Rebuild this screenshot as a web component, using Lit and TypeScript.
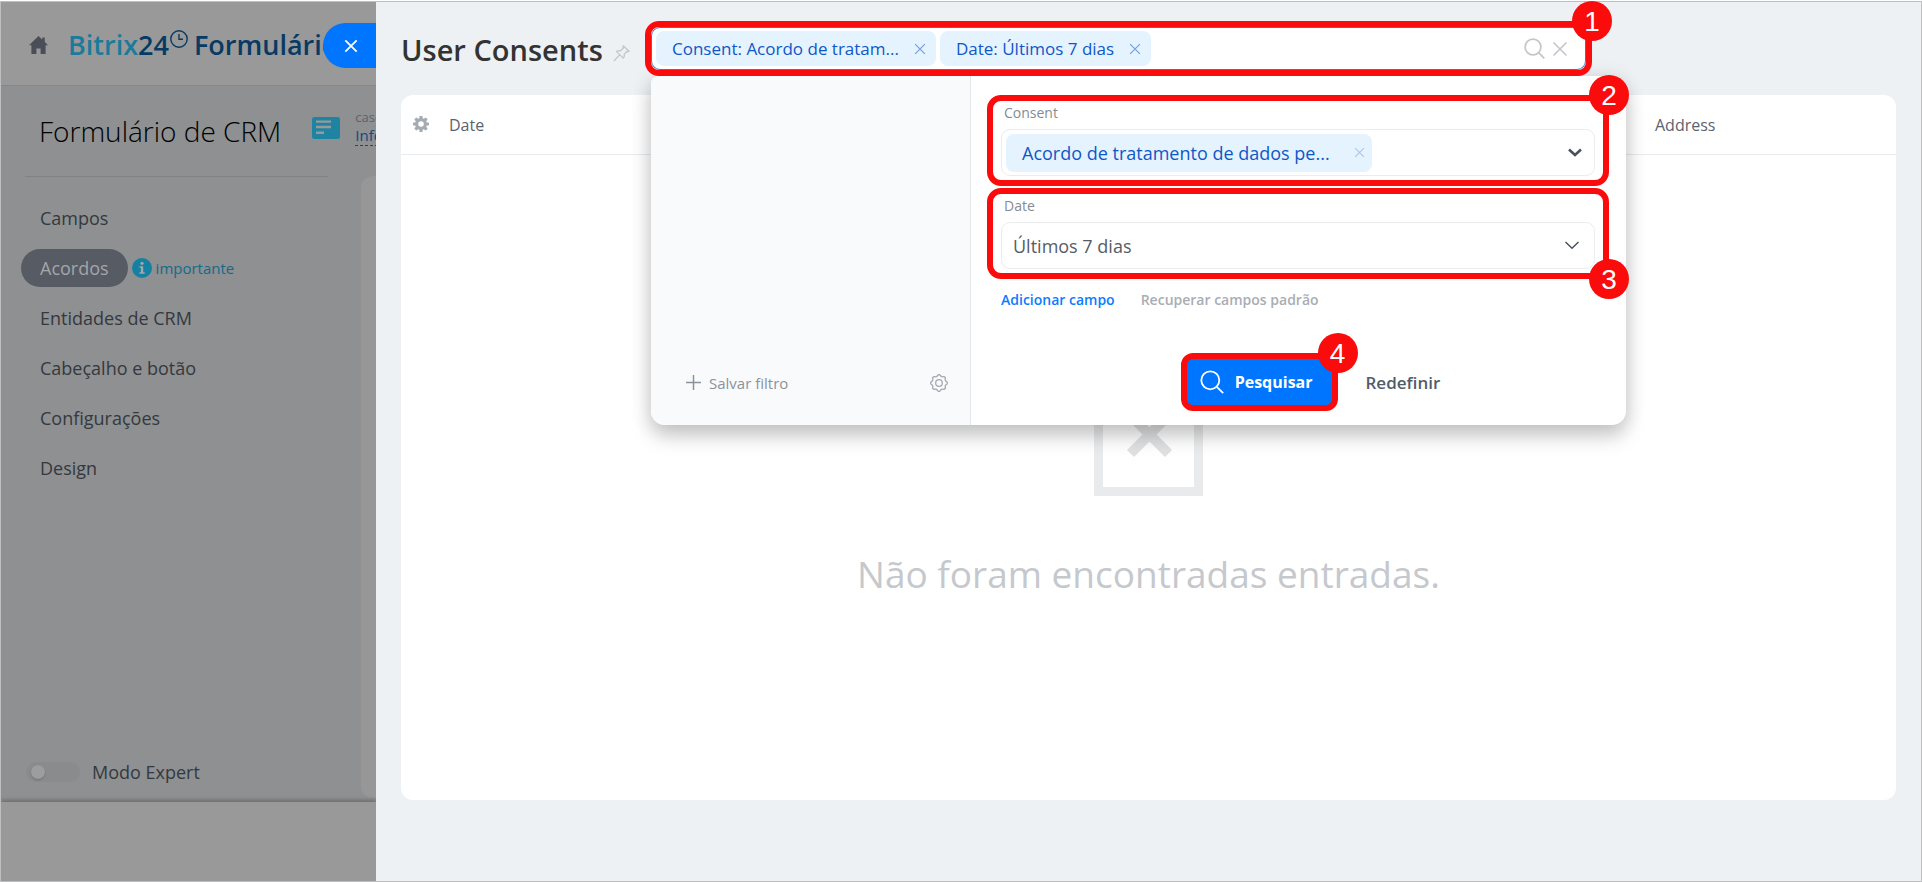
import { LitElement, html, css, svg } from "lit";
import { customElement, property, state } from "lit/decorators.js";
import { classMap } from "lit/directives/class-map.js";

const cross = (size: number, width = 1) => html`
  <svg width=${size} height=${size} viewBox="0 0 16 16" fill="none" stroke="currentColor" stroke-width=${width} aria-hidden="true">
    <path d="M1.5 1.5l13 13M14.5 1.5l-13 13" />
  </svg>`;

const magnifier = (size: number, width = 1.5) => html`
  <svg width=${size} height=${size} viewBox="0 0 24 24" fill="none" stroke="currentColor" stroke-width=${width} aria-hidden="true">
    <circle cx="10.3" cy="10.3" r="9" />
    <path d="M16.8 16.8l6.4 6.4" />
  </svg>`;

const gearTeeth = [0, 45, 90, 135, 180, 225, 270, 315].map(
  (a) => svg`<rect x="6.4" y="0" width="3.2" height="4" rx="0.6" transform="rotate(${a} 8 8)" />`
);

/* Outline of an eight-lobed cog around (9, 9). */
const cogOutline =
  Array.from({ length: 96 }, (_, i) => {
    const t = (i / 96) * Math.PI * 2;
    const r = 7.6 + 0.75 * Math.tanh(1.6 * Math.cos(8 * t));
    return `${i ? "L" : "M"}${(9 + r * Math.sin(t)).toFixed(2)} ${(9 - r * Math.cos(t)).toFixed(2)}`;
  }).join("") + "Z";

const base = css`
  * {
    box-sizing: border-box;
  }
  svg {
    display: block;
    flex: none;
  }
  button,
  input,
  select {
    font: inherit;
    color: inherit;
    margin: 0;
    padding: 0;
    border: 0;
    background: none;
    outline: none;
  }
  button {
    cursor: pointer;
  }
`;

@customElement("callout-frame")
class CalloutFrame extends LitElement {
  @property() number = "";
  @property() corner = "top";

  static styles = css`
    :host {
      display: block;
      position: relative;
      border: 6px solid #fa0c0c;
      border-radius: 14px;
    }
    .badge {
      position: absolute;
      right: -26px;
      width: 40px;
      height: 40px;
      border-radius: 50%;
      background: #fa0c0c;
      color: #fff;
      font: 28px/42px "Liberation Sans", Arial, sans-serif;
      text-align: center;
      z-index: 1;
    }
    .top {
      top: -26px;
    }
    .bottom {
      bottom: -26px;
    }
  `;

  render() {
    return html`<slot></slot>
      <span class="badge ${classMap({ top: this.corner === "top", bottom: this.corner === "bottom" })}">${this.number}</span>`;
  }
}

@customElement("form-editor")
class FormEditor extends LitElement {
  @state() private items = ["Campos", "Acordos", "Entidades de CRM", "Cabeçalho e botão", "Configurações", "Design"];
  @state() private current = "Acordos";

  static styles = [
    base,
    css`
      :host {
        display: flex;
        flex-direction: column;
        overflow: hidden;
        min-width: 0;
        background: #8e9091;
        color: #34393f;
        white-space: nowrap;
      }
      a {
        color: inherit;
        text-decoration: none;
      }
      .top {
        display: flex;
        align-items: center;
        height: 84px;
        padding: 2px 0 0 28px;
        background: #999;
        border-bottom: 1px solid #858788;
      }
      .home {
        color: #4a4f57;
      }
      .logo {
        display: flex;
        margin-left: 20px;
        font-size: 27px;
        line-height: 36px;
        font-weight: 600;
        color: #083a63;
      }
      .brand {
        color: #1c7a9a;
      }
      .clock {
        margin: 3px 6px 0 1px;
      }
      .heading {
        display: flex;
        align-items: center;
        height: 90px;
        padding-left: 38px;
      }
      h1 {
        margin: 0;
        font-size: 28px;
        line-height: 38px;
        font-weight: 300;
        color: #000;
      }
      .doc {
        margin: 0 15px 6px 31px;
        color: #1f84a1;
      }
      .caption {
        font-size: 13px;
        line-height: 17px;
        color: #5e6368;
        padding-bottom: 8px;
      }
      .caption a {
        display: block;
        width: max-content;
        font-size: 15px;
        line-height: 19px;
        color: #0f4a82;
        border-bottom: 1px dashed #0f4a82;
      }
      .body {
        flex: 1;
        display: flex;
      }
      .side {
        display: flex;
        flex-direction: column;
        width: 327px;
        margin: 0 33px 0 0;
        flex: none;
      }
      .rule {
        margin: 0 0 0 24px;
        border: 0;
        border-top: 1px solid #808283;
      }
      nav {
        display: flex;
        flex-direction: column;
        gap: 12px;
        padding: 22px 0 0 20px;
        font-size: 18px;
        line-height: 38px;
      }
      .row {
        display: flex;
        align-items: center;
        gap: 4px;
      }
      .link {
        padding: 0 19px;
        border-radius: 19px;
      }
      .link.active {
        background: #565b64;
        color: #a3a6a9;
      }
      .note {
        display: flex;
        align-items: center;
        gap: 4px;
        font-size: 15px;
        color: #126b8a;
      }
      .expert {
        display: flex;
        align-items: center;
        gap: 12px;
        margin: auto 0 17px 25px;
        font-size: 18px;
        line-height: 26px;
      }
      .toggle {
        appearance: none;
        display: flex;
        align-items: center;
        width: 54px;
        height: 20px;
        padding: 0 5px;
        border-radius: 10px;
        background: #898b8c;
      }
      .toggle::before {
        content: "";
        width: 14px;
        height: 14px;
        border-radius: 50%;
        background: #9c9d9d;
        box-shadow: 0 1px 2px rgba(0, 0, 0, 0.2);
      }
      .toggle:checked {
        justify-content: flex-end;
      }
      .card {
        flex: 1;
        margin-bottom: 4px;
        border-radius: 12px 0 0 12px;
        background: #979797;
      }
      .bottom {
        height: 79px;
        background: #999;
        box-shadow: 0 -2px 4px rgba(0, 0, 0, 0.25);
      }
    `,
  ];

  render() {
    return html`
      <header class="top">
        <a class="home" href="#" aria-label="Home">
          <svg width="19" height="18" viewBox="0 0 19 18" fill="currentColor">
            <path d="M9.5 0L0 9.2h2.4V18h5v-5.600h4.200V18h5V9.200H19L15.800 6V1.600h-2.500v2z" />
          </svg>
        </a>
        <div class="logo">
          <span class="brand">Bitrix</span><span>24</span>
          <svg class="clock" width="18" height="18" viewBox="0 0 18 18" fill="none" stroke="currentColor" stroke-width="1.400">
            <circle cx="9" cy="9" r="8.200" />
            <path d="M9 4v5.200h4" />
          </svg>
          <span>Formulário</span>
        </div>
      </header>
      <div class="heading">
        <h1>Formulário de CRM</h1>
        <svg class="doc" width="28" height="22" viewBox="0 0 28 22">
          <rect width="28" height="22" rx="2.500" fill="currentColor" />
          <path d="M4 4.600h15M4 10h15M4 15.800h8" stroke="#999" stroke-width="2.400" />
        </svg>
        <div class="caption">caso<a href="#">Info</a></div>
      </div>
      <div class="body">
        <div class="side">
          <hr class="rule" />
          <nav>
            ${this.items.map(
              (item) => html`<div class="row">
                <a
                  href="#"
                  class="link ${classMap({ active: item === this.current })}"
                  @click=${(e: Event) => {
                    e.preventDefault();
                    this.current = item;
                  }}
                  >${item}</a
                >
                ${item === "Acordos"
                  ? html`<span class="note">
                      <svg width="20" height="20" viewBox="0 0 20 20">
                        <circle cx="10" cy="10" r="10" fill="#1580a2" />
                        <circle cx="10" cy="5.300" r="1.600" fill="#a3a8aa" />
                        <path d="M7.500 8.300h3.700v6h1.500v1.500h-5.200v-1.500h1.400V9.800H7.500z" fill="#a3a8aa" />
                      </svg>
                      importante</span
                    >`
                  : null}
              </div>`
            )}
          </nav>
          <label class="expert"><input type="checkbox" class="toggle" />Modo Expert</label>
        </div>
        <div class="card"></div>
      </div>
      <footer class="bottom"></footer>
    `;
  }
}

@customElement("filter-search")
class FilterSearch extends LitElement {
  @state() private tags = ["Consent: Acordo de tratam...", "Date: Últimos 7 dias"];

  static styles = [
    base,
    css`
      :host {
        display: block;
        position: relative;
        z-index: 2;
      }
      .frame {
        z-index: 1;
        background: #fff;
      }
      .box {
        display: flex;
        align-items: center;
        gap: 4px;
        height: 43px;
        padding: 0 17px 0 4px;
        border: 1px solid #1a7df5;
        border-radius: 9px;
        background: #fff;
      }
      .tag {
        display: flex;
        align-items: center;
        gap: 15px;
        height: 35px;
        padding: 0 10px 0 16px;
        border-radius: 8px;
        background: #e5f3fe;
        color: #0f57c8;
        font-size: 17px;
        line-height: 24px;
        white-space: nowrap;
      }
      .tag button {
        color: #75a0e2;
      }
      .query {
        flex: 1;
        width: 0;
        min-width: 40px;
        height: 35px;
      }
      .tools {
        display: flex;
        align-items: center;
        gap: 7px;
        color: #c3c6ca;
      }
      .popup {
        position: absolute;
        top: 100%;
        left: 6px;
        right: -34px;
        display: grid;
        grid-template-columns: 320px minmax(0, 1fr);
        border-radius: 8px 14px 14px 14px;
        background: #fff;
        box-shadow: 0 12px 20px rgba(0, 0, 0, 0.18), 0 2px 20px rgba(0, 0, 0, 0.12);
      }
      .presets {
        display: flex;
        align-items: flex-end;
        border-right: 1px solid #e2e5e9;
        border-radius: 8px 0 0 14px;
        background: #f9fafc;
      }
      .save {
        flex: 1;
        display: flex;
        align-items: center;
        justify-content: space-between;
        height: 85px;
        padding: 0 22px 0 35px;
        color: #8b929c;
        font-size: 15px;
        line-height: 22px;
      }
      .save button {
        display: flex;
        align-items: center;
        gap: 8px;
      }
      .fields {
        display: flex;
        flex-direction: column;
        padding: 19px 17px 14px 16px;
      }
      .field {
        padding: 0 8px 4px;
      }
      .field + .field {
        margin-top: 2px;
      }
      .label {
        display: block;
        padding: 0 3px 4px;
        font-size: 14px;
        line-height: 24px;
        color: #858b94;
      }
      .control {
        position: relative;
        display: flex;
        align-items: center;
        height: 47px;
        padding: 0 12px 0 4px;
        border: 1px solid #ebecee;
        border-radius: 9px;
      }
      .chip {
        display: flex;
        align-items: center;
        gap: 24px;
        height: 38px;
        padding: 0 7px 0 16px;
        border-radius: 8px;
        background: #e5f3fe;
        color: #0f57c8;
        font-size: 18px;
        white-space: nowrap;
      }
      .chip button {
        color: #a9c6ee;
      }
      .entry {
        flex: 1;
        width: 0;
        min-width: 20px;
        height: 38px;
      }
      .chevron {
        color: #4a525e;
      }
      .select {
        appearance: none;
        flex: 1;
        min-width: 0;
        height: 45px;
        padding: 0 7px;
        font-size: 18px;
        color: #555c66;
      }
      .thin {
        padding-right: 3px;
      }
      .links {
        display: flex;
        gap: 26px;
        margin: 9px 0 0 14px;
        font-size: 14px;
        line-height: 24px;
        font-weight: 600;
      }
      .add {
        color: #0b7bff;
      }
      .restore {
        color: #a9adb4;
      }
      .actions {
        display: flex;
        align-items: center;
        justify-content: center;
        gap: 28px;
        margin-top: 41px;
        padding-left: 25px;
      }
      .search {
        display: flex;
        align-items: center;
        gap: 11px;
        height: 46px;
        padding: 0 19px 0 13px;
        border-radius: 7px;
        background: #0075ff;
        color: #fff;
        font-size: 16px;
        font-weight: 700;
      }
      .go {
        border-radius: 12px;
        background: #0075ff;
      }
      .reset {
        font-size: 17px;
        font-weight: 600;
        color: #525c69;
      }
    `,
  ];

  render() {
    return html`
      <form class="popup" @submit=${(e: Event) => e.preventDefault()}>
        <div class="presets">
          <div class="save">
            <button type="button">
              <svg width="15" height="15" viewBox="0 0 15 15" stroke="currentColor" stroke-width="1.500"><path d="M7.500 0v15M0 7.500h15" /></svg>
              Salvar filtro
            </button>
            <button type="button" aria-label="Configurar filtro">
              <svg width="18" height="18" viewBox="0 0 18 18" fill="none" stroke="#a3a9b1" stroke-width="1.300">
                <path d=${cogOutline} />
                <circle cx="9" cy="9" r="3.300" />
              </svg>
            </button>
          </div>
        </div>
        <div class="fields">
          <callout-frame class="field" number="2">
            <label class="label" for="consent">Consent</label>
            <div class="control">
              <span class="chip">Acordo de tratamento de dados pe...<button type="button" aria-label="Remover">${cross(11, 1.6)}</button></span>
              <input id="consent" class="entry" />
              <svg class="chevron" width="14" height="9" viewBox="0 0 14 9" fill="none" stroke="currentColor" stroke-width="2.600"><path d="M1 1.500l6 5.500 6-5.500" /></svg>
            </div>
          </callout-frame>
          <callout-frame class="field" number="3" corner="bottom">
            <label class="label" for="date">Date</label>
            <div class="control">
              <select id="date" class="select"><option>Últimos 7 dias</option></select>
              <span class="thin"><svg class="chevron" width="14" height="9" viewBox="0 0 14 9" fill="none" stroke="currentColor" stroke-width="1.500"><path d="M.5 1l6.500 6.300L13.500 1" /></svg></span>
            </div>
          </callout-frame>
          <div class="links">
            <button type="button" class="add">Adicionar campo</button>
            <button type="button" class="restore">Recuperar campos padrão</button>
          </div>
          <div class="actions">
            <callout-frame class="go" number="4">
              <button class="search">${magnifier(24, 1.8)}Pesquisar</button>
            </callout-frame>
            <button type="reset" class="reset">Redefinir</button>
          </div>
        </div>
      </form>
      <callout-frame class="frame" number="1">
        <div class="box">
          ${this.tags.map(
            (tag) => html`<span class="tag">${tag}<button
                aria-label="Remover"
                @click=${() => (this.tags = this.tags.filter((t) => t !== tag))}
              >${cross(12, 1.7)}</button></span>`
          )}
          <input class="query" type="text" aria-label="Filtro" />
          <div class="tools">
            <button aria-label="Pesquisar">${magnifier(21, 2)}</button>
            <button aria-label="Limpar">${cross(16, 1.6)}</button>
          </div>
        </div>
      </callout-frame>
    `;
  }
}

@customElement("app-root")
class AppRoot extends LitElement {
  static styles = [
    base,
    css`
      :host {
        display: flex;
        box-sizing: border-box;
        min-height: 100vh;
        padding-top: 1px;
        background: #fff;
        font-family: "Open Sans", "Noto Sans", sans-serif;
      }
      .window {
        flex: 1;
        display: grid;
        grid-template-columns: 375px minmax(0, 1fr);
        border: 1px solid #bdbfc0;
      }
      .panel {
        position: relative;
        display: flex;
        flex-direction: column;
        padding: 0 25px 81px;
        background: #edf1f4;
      }
      .close {
        position: absolute;
        top: 21px;
        left: -53px;
        display: flex;
        align-items: center;
        width: 53px;
        height: 45px;
        padding-left: 21px;
        border-radius: 23px 0 0 23px;
        background: #0075ff;
        color: #fff;
      }
      .head {
        display: flex;
        align-items: center;
        height: 93px;
      }
      .title {
        display: flex;
        align-items: center;
        gap: 10px;
        padding-top: 2px;
        flex: 0 0 244px;
      }
      h2 {
        margin: 0;
        font-size: 29px;
        line-height: 40px;
        font-weight: 600;
        color: #333;
        white-space: nowrap;
      }
      .pin {
        padding-top: 8px;
        color: #c2c6ca;
      }
      .filter {
        flex: 0 1 947px;
        min-width: 0;
      }
      .card {
        flex: 1;
        border-radius: 12px;
        background: #fff;
      }
      table {
        width: 100%;
        border-collapse: collapse;
        table-layout: fixed;
      }
      th {
        height: 59px;
        padding: 2px 8px 0;
        border-bottom: 1px solid #e9ebed;
        text-align: left;
        font-size: 16px;
        line-height: 22px;
        font-weight: 400;
        color: #5b6370;
      }
      .tune {
        width: 40px;
        padding: 0 12px;
        color: #a5abb3;
      }
      .tune button {
        display: block;
      }
      .address {
        width: 249px;
      }
      .empty {
        display: flex;
        flex-direction: column;
        align-items: center;
        gap: 53px;
        padding-top: 232px;
        font-size: 37px;
        line-height: 50px;
        color: #c5c8cc;
        text-align: center;
      }
      .empty p {
        margin: 0;
      }
    `,
  ];

  render() {
    return html`
      <div class="window">
        <form-editor></form-editor>
        <main class="panel">
          <button class="close" aria-label="Fechar">${cross(14, 2)}</button>
          <div class="head">
            <div class="title">
              <h2>User Consents</h2>
              <button class="pin" aria-label="Fixar">
                <svg width="17" height="17" viewBox="0 0 17 17" fill="none" stroke="currentColor" stroke-width="1.300">
                  <path d="M10.500 1l5.500 5.300-1.500.6-.8-.3-2.600 2.800c.5 1.400.2 2.700-.8 3.700L3.600 6.600c1.200-1 2.500-1.200 3.800-.7l2.800-2.600-.3-.9zM6.700 9.900L.8 16" />
                </svg>
              </button>
            </div>
            <filter-search class="filter"></filter-search>
          </div>
          <section class="card">
            <table>
              <thead>
                <tr>
                  <th class="tune">
                    <button aria-label="Configurar colunas">
                      <svg width="16" height="16" viewBox="0 0 16 16" fill="currentColor">
                        ${gearTeeth}
                        <circle cx="8" cy="8" r="4.400" fill="none" stroke="currentColor" stroke-width="3.200" />
                      </svg>
                    </button>
                  </th>
                  <th>Date</th>
                  <th class="address">Address</th>
                </tr>
              </thead>
            </table>
            <div class="empty">
              <svg width="109" height="109" viewBox="0 0 109 109" fill="none" stroke="#e9eaeb">
                <rect x="4.500" y="4.500" width="100" height="100" stroke-width="9" />
                <path d="M36.500 28.500l38 38M74.500 28.500l-38 38" stroke="#e0e1e3" stroke-width="10" />
              </svg>
              <p>Não foram encontradas entradas.</p>
            </div>
          </section>
        </main>
      </div>
    `;
  }
}
